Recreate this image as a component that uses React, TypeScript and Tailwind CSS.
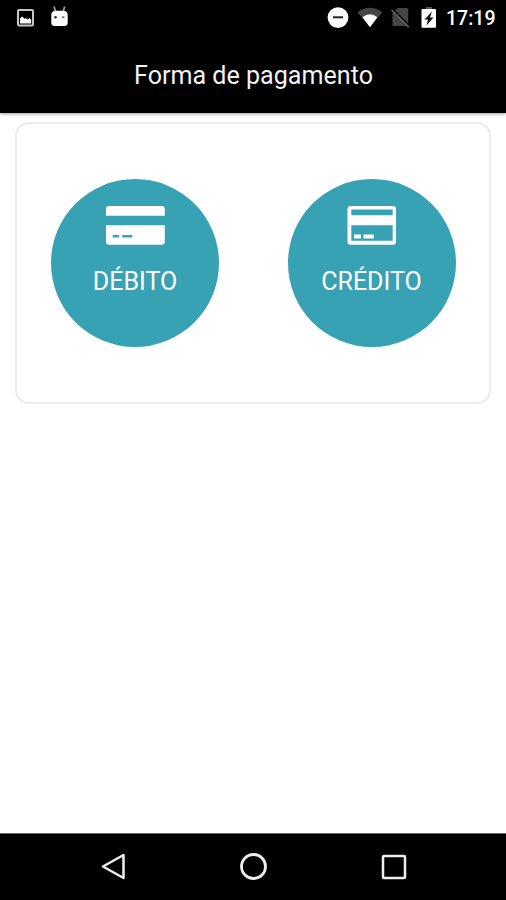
import type { ReactNode } from 'react';

function StatusBar() {
  return (
    <div className="flex h-9 items-start justify-between text-white">
      <div className="flex pl-[16px]">
        <svg className="h-9 w-[19px]" viewBox="16 0 19 36" fill="none">
          <rect x="18" y="10" width="15" height="15.5" rx="1" stroke="#c4c4c4" strokeWidth="2" />
          <path d="M20 23.5v-5.2l2.2-1.8 2.3 2.3 1.4-.6 1.8 1.3 1.8-1.5 1.7 2v3.5z" fill="#fff" />
        </svg>
        <svg className="ml-[15px] h-9 w-5" viewBox="50 0 20 36">
          <path d="M54 6.5l1.5 5M64.7 6.5l-1.5 5" stroke="#999" strokeWidth="1.8" />
          <path d="M51.3 15c0-3.2 2.2-4.3 4.5-4.3h7.4c2.3 0 4.5 1.1 4.5 4.3v8c0 1.7-1.2 2.9-2.8 2.9h-10.8c-1.6 0-2.8-1.2-2.8-2.9z" fill="#fff" />
          <circle cx="55.5" cy="17.2" r="1.3" fill="#333" />
          <ellipse cx="63.2" cy="17.2" rx="1.5" ry="1" fill="#777" />
        </svg>
      </div>
      <div className="flex">
        <svg className="h-9 w-[22px]" viewBox="327 0 22 36">
          <circle cx="338" cy="17.6" r="10.4" fill="#fff" />
          <path d="M333 17.3h10" stroke="#222" strokeWidth="2" />
        </svg>
        <svg className="ml-2 h-9 w-[26px]" viewBox="357 0 26 36">
          <path d="M357.5 12.2Q370 3.5 382.3 12.2L370 27.2z" fill="#454545" />
          <path d="M362.5 17.2Q370 11.4 377.3 17.2L370 27.2z" fill="#fff" />
        </svg>
        <svg className="ml-[7px] h-9 w-5" viewBox="390 0 20 36">
          <path d="M397.5 8h9c1 0 1.7.7 1.7 1.7V26h-15.7V13z" fill="#454545" />
          <path d="M392.5 8.7l17.3 17.4" stroke="#000" strokeWidth="1.5" />
          <path d="M391.5 9.7l17.3 17.4" stroke="#606060" strokeWidth="1.5" />
        </svg>
        <svg className="ml-[11px] h-9 w-4" viewBox="421 0 16 36">
          <path d="M426 7h6v3h-6z" fill="#555" />
          <rect x="421.5" y="9" width="14.5" height="18.8" rx="1" fill="#fff" />
          <path d="M432 11.500l-7.500 8h3.500l-1.500 6 7-8h-3.500z" fill="#111" />
        </svg>
        <span className="ml-[9px] mt-[7px] w-[60px] whitespace-nowrap text-[19.5px] font-medium leading-6">17:19</span>
      </div>
    </div>
  );
}

function DebitIcon() {
  return (
    <svg className="h-10 w-[60px]" viewBox="105 205 60 40" fill="#fff">
      <path d="M106 215.7V209q0-3 3-3h52.8q3 0 3 3v6.7z" />
      <path fillRule="evenodd" d="M106 225.2h58.8v16.500q0 3-3 3H109q-3 0-3-3zM112.700 235v2.500h6.300V235zM122.300 235v2.500h10V235z" />
    </svg>
  );
}

function CreditIcon() {
  return (
    <svg className="h-10 w-[50px]" viewBox="347 205 50 40" fill="#fff">
      <path fillRule="evenodd" d="M350.5 206h42.500q3 0 3 3v32.700q0 3-3 3h-42.500q-3 0-3-3V209q0-3 3-3zM351.300 209.500v5.700h41.400v-5.700zM351.300 225.200v15.600h41.400v-15.600z" />
      <path d="M354 234.500h7v4h-7zM363.500 234.500h10.200v4h-10.200z" />
    </svg>
  );
}

function PaymentButton({ icon, children }: { icon: ReactNode; children: ReactNode }) {
  return (
    <button className="flex size-[168px] flex-col items-center rounded-full bg-[#38a2b5] pt-[26px] text-[25px] leading-[30px] text-white">
      {icon}
      <span className="mt-[22px] whitespace-nowrap">{children}</span>
    </button>
  );
}

export default function App() {
  return (
    <div className="flex h-[900px] w-[506px] flex-col bg-white font-['Roboto',sans-serif]">
      <header className="h-[113px] shrink-0 bg-black shadow-[0_1px_3px_rgba(0,0,0,0.4)]">
        <StatusBar />
        <h1 className="mt-[25px] text-center text-[25.1px] leading-[30px] text-[#f2f2f2]">
          <span className="ml-[1px]">Forma de pagamento</span>
        </h1>
      </header>
      <main className="flex-1 px-[15px] pt-[9px]">
        <section className="flex h-[282px] justify-between rounded-[14px] border-2 border-[#ebebeb] pl-[34px] pr-[33.5px] pt-[55px]">
          <PaymentButton icon={<DebitIcon />}>DÉBITO</PaymentButton>
          <PaymentButton icon={<CreditIcon />}>CRÉDITO</PaymentButton>
        </section>
      </main>
      <nav className="flex h-[67px] shrink-0 items-center justify-between border-t border-[#666] bg-black pl-[100px] pr-[99px]">
        <svg className="h-7 w-[26px]" viewBox="0 0 26 28" fill="none" stroke="#eee" strokeWidth="2.5">
          <path d="M23.5 2v23L3 13.5z" strokeLinejoin="round" />
        </svg>
        <svg className="size-7" viewBox="0 0 28 28" fill="none" stroke="#eee" strokeWidth="2.8">
          <circle cx="13.5" cy="13.5" r="12" />
        </svg>
        <svg className="h-7 w-[26px]" viewBox="0 0 26 28" fill="none" stroke="#eee" strokeWidth="2.5">
          <rect x="2" y="3" width="22" height="22" rx="1" />
        </svg>
      </nav>
    </div>
  );
}
